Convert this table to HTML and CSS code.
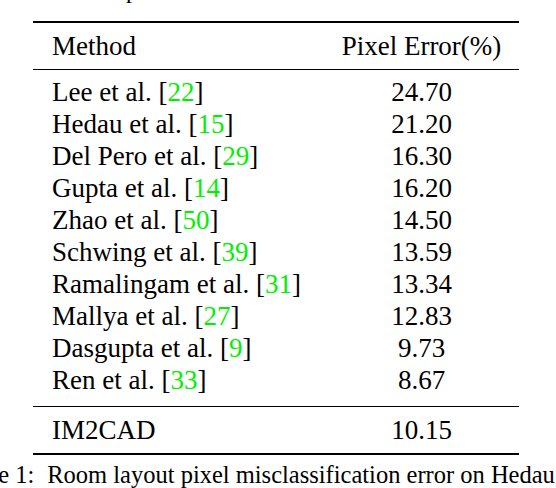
FILE: index.html
```html
<!DOCTYPE html>
<html>
<head>
<meta charset="utf-8">
<link rel="stylesheet" href="styles.css">
</head>
<body>
<div class="prev"><span>p</span></div>
<table class="results">
  <thead>
    <tr><th class="m">Method</th><th class="v">Pixel Error(%)</th></tr>
  </thead>
  <tbody class="others">
    <tr class="first"><td class="m">Lee et al. [<span class="cite">22</span>]</td><td class="v">24.70</td></tr>
    <tr><td class="m">Hedau et al. [<span class="cite">15</span>]</td><td class="v">21.20</td></tr>
    <tr><td class="m">Del Pero et al. [<span class="cite">29</span>]</td><td class="v">16.30</td></tr>
    <tr><td class="m">Gupta et al. [<span class="cite">14</span>]</td><td class="v">16.20</td></tr>
    <tr><td class="m">Zhao et al. [<span class="cite">50</span>]</td><td class="v">14.50</td></tr>
    <tr><td class="m">Schwing et al. [<span class="cite">39</span>]</td><td class="v">13.59</td></tr>
    <tr><td class="m">Ramalingam et al. [<span class="cite">31</span>]</td><td class="v">13.34</td></tr>
    <tr><td class="m">Mallya et al. [<span class="cite">27</span>]</td><td class="v">12.83</td></tr>
    <tr><td class="m">Dasgupta et al. [<span class="cite">9</span>]</td><td class="v">9.73</td></tr>
    <tr class="last"><td class="m">Ren et al. [<span class="cite">33</span>]</td><td class="v">8.67</td></tr>
  </tbody>
  <tbody class="ours">
    <tr><td class="m">IM2CAD</td><td class="v">10.15</td></tr>
  </tbody>
</table>
<div class="caption"><span class="label">Table 1:</span><span class="text">Room layout pixel misclassification error on Hedau dataset.</span></div>
</body>
</html>
```

FILE: styles.css
```css
html, body {
  margin: 0;
  padding: 0;
  background: #fff;
}
body {
  width: 556px;
  height: 488px;
  overflow: hidden;
  font-family: "Liberation Serif", "Times New Roman", Tinos, "DejaVu Serif", serif;
  color: #000;
}
.prev {
  height: 21px;
  font-size: 24px;
  line-height: 24px;
  overflow: hidden;
}
.prev span {
  display: block;
  margin-top: -22px;
  padding-left: 126px;
}
.results {
  margin-left: 33px;
  width: 486px;
  border-collapse: collapse;
  font-family: "Liberation Serif", "Times New Roman", Tinos, "DejaVu Serif", serif;
  font-size: 27px;
  line-height: 32px;
}
.results thead tr {
  border-top: 2px solid #000;
  border-bottom: 1px solid #000;
}
.results th {
  font-weight: normal;
  padding: 7px 0 7px 0;
}
.results td {
  padding: 0;
}
.results .m {
  text-align: left;
  padding-left: 19px;
  width: 272px;
}
.results .v {
  text-align: center;
  width: 195px;
}
.results tr.first td {
  padding-top: 6px;
}
.results tr.last td {
  padding-bottom: 10px;
}
.results tbody.ours {
  border-top: 1px solid #000;
  border-bottom: 2px solid #000;
}
.results tbody.ours td {
  padding-top: 7px;
  padding-bottom: 7px;
}
.cite {
  color: #00f000;
}
.caption {
  white-space: nowrap;
  font-size: 24.5px;
  line-height: 30px;
  margin-top: 5px;
  margin-left: -45px;
}
.caption .label {
  margin-right: 13px;
}
```
